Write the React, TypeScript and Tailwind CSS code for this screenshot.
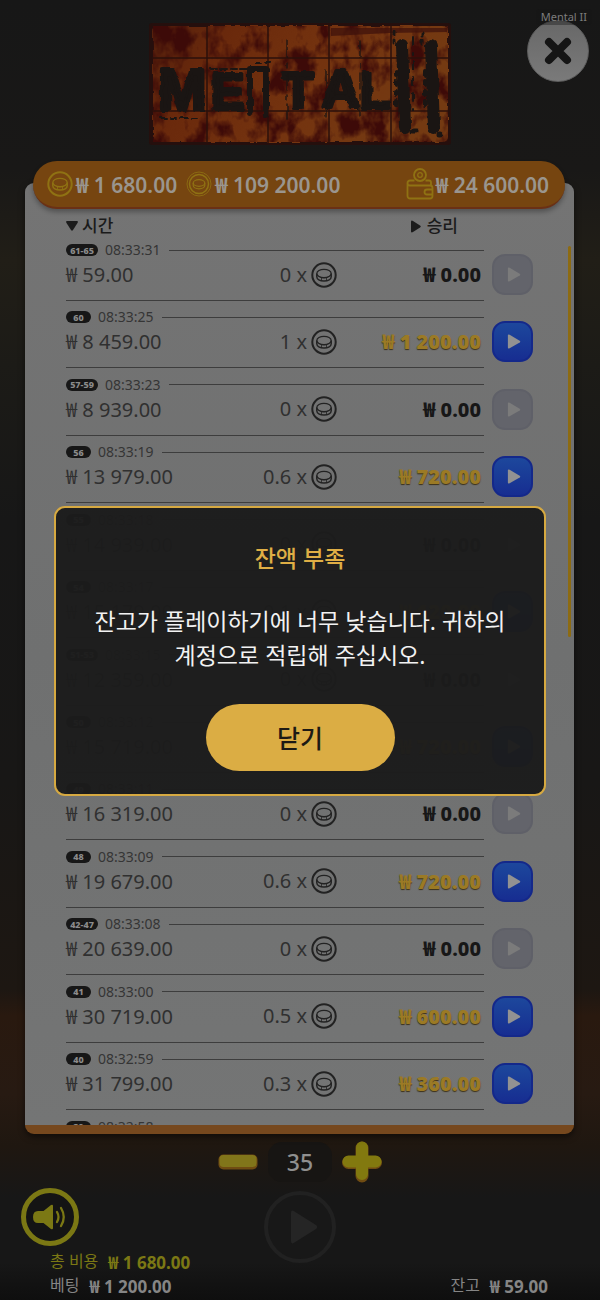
import React, { useState } from "react";

type Entry = {
  rounds: string;
  time: string;
  balance: string;
  multiplier: string;
  win: string;
};

const ENTRIES: Entry[] = [
  { rounds: "61-65", time: "08:33:31", balance: "59.00", multiplier: "0", win: "0.00" },
  { rounds: "60", time: "08:33:25", balance: "8 459.00", multiplier: "1", win: "1 200.00" },
  { rounds: "57-59", time: "08:33:23", balance: "8 939.00", multiplier: "0", win: "0.00" },
  { rounds: "56", time: "08:33:19", balance: "13 979.00", multiplier: "0.6", win: "720.00" },
  { rounds: "55", time: "08:33:18", balance: "14 939.00", multiplier: "0", win: "0.00" },
  { rounds: "54", time: "08:33:17", balance: "15 179.00", multiplier: "0.1", win: "120.00" },
  { rounds: "51-53", time: "08:33:15", balance: "12 359.00", multiplier: "0", win: "0.00" },
  { rounds: "50", time: "08:33:12", balance: "15 719.00", multiplier: "0.6", win: "720.00" },
  { rounds: "49", time: "08:33:11", balance: "16 319.00", multiplier: "0", win: "0.00" },
  { rounds: "48", time: "08:33:09", balance: "19 679.00", multiplier: "0.6", win: "720.00" },
  { rounds: "42-47", time: "08:33:08", balance: "20 639.00", multiplier: "0", win: "0.00" },
  { rounds: "41", time: "08:33:00", balance: "30 719.00", multiplier: "0.5", win: "600.00" },
  { rounds: "40", time: "08:32:59", balance: "31 799.00", multiplier: "0.3", win: "360.00" },
  { rounds: "39", time: "08:32:58", balance: "32 999.00", multiplier: "0", win: "0.00" },
];

function Money({ value }: { value: string }) {
  return (
    <span className="whitespace-nowrap">
      <span className="font-['Noto_Sans_CJK_KR',sans-serif]">₩</span> {value}
    </span>
  );
}

function CoinIcon({ className }: { className: string }) {
  return (
    <svg viewBox="0 0 26 26" className={className} fill="none" stroke="currentColor" aria-hidden="true">
      <circle cx="13" cy="13" r="11.7" strokeWidth="2" />
      <ellipse cx="13" cy="11.5" rx="7.2" ry="4.2" strokeWidth="1.2" />
      <path d="M5.8 11.5v3.3c0 2.4 3.1 4.2 7.2 4.2s7.2-1.8 7.2-4.2v-3.3" strokeWidth="1.5" />
      <path d="M7.5 13.8c1 1.4 3 2.2 5.5 2.2s4.500-.8 5.500-2.200M10.500 16v2.500M15.500 16v2.500" strokeWidth="0.8" />
    </svg>
  );
}

function CoinStackIcon({ className }: { className: string }) {
  return (
    <svg viewBox="0 0 26 26" className={className} fill="none" stroke="currentColor" aria-hidden="true">
      <circle cx="13" cy="13" r="12" strokeWidth="0.8" />
      <circle cx="13" cy="13" r="9.5" strokeWidth="1.5" />
      <ellipse cx="13" cy="12" rx="5.8" ry="3.3" strokeWidth="1.2" />
      <path d="M7.2 12v2.300c0 2 2.500 3.500 5.800 3.500s5.800-1.500 5.800-3.500V12" strokeWidth="1.2" />
    </svg>
  );
}

function WalletIcon({ className }: { className: string }) {
  return (
    <svg viewBox="0 0 28 32" className={className} fill="none" stroke="currentColor" strokeWidth="1.8" aria-hidden="true">
      <circle cx="14" cy="7" r="6" />
      <circle cx="14" cy="7" r="2.3" strokeWidth="1.3" />
      <path d="M8.500 12.500H4a2.500 2.500 0 0 0 0 5h20a2.500 2.500 0 0 1 2.500 2.500v8a2.500 2.500 0 0 1-2.500 2.500H4A2.500 2.500 0 0 1 1.500 28V15M19.500 12.500H23a2 2 0 0 1 2 2v3" />
      <path d="M26.500 21.500H21a2.500 2.500 0 0 0 0 5h5.500" />
    </svg>
  );
}

function Logo() {
  const seams = [58, 119, 180, 242];
  return (
    <svg viewBox="0 0 302 122" className="h-[122px] w-[302px]" role="img" aria-label="Mental II">
      <defs>
        <linearGradient id="rust" x1="0" x2="1" y1="0" y2="0.25">
          <stop offset="0" stopColor="#54200c" />
          <stop offset="0.25" stopColor="#6a290c" />
          <stop offset="0.6" stopColor="#74330f" />
          <stop offset="1" stopColor="#743a12" />
        </linearGradient>
        <filter id="stain" x="0" y="0" width="100%" height="100%" colorInterpolationFilters="sRGB">
          <feTurbulence type="fractalNoise" baseFrequency="0.05 0.035" numOctaves="4" seed="8" />
          <feColorMatrix values="0 0 0 0 0.24  0 0 0 0 0.04  0 0 0 0 0.03  4 0 0 0 -1.7" />
        </filter>
        <filter id="rough" x="-5%" y="-5%" width="110%" height="110%" colorInterpolationFilters="sRGB">
          <feTurbulence type="fractalNoise" baseFrequency="0.14" numOctaves="2" seed="3" />
          <feDisplacementMap in="SourceGraphic" scale="4" xChannelSelector="R" yChannelSelector="G" />
        </filter>
      </defs>
      <rect width="302" height="122" rx="3" fill="#250f0d" />
      <g filter="url(#rough)">
        <rect x="4" y="3" width="295" height="116" rx="5" fill="url(#rust)" />
      </g>
      <rect x="4" y="3" width="295" height="116" rx="5" filter="url(#stain)" />
      <path d="M182 5H298V9L240 10L182 13Z" fill="#3c100b" opacity="0.7" />
      <g stroke="#2b100b" strokeWidth="1.5">
        {seams.map((x) => (
          <path key={x} d={`M${x} 2V120`} />
        ))}
        <path d="M3 35H299M3 88H299" />
      </g>
      <g
        filter="url(#rough)"
        fill="#1a1513"
        stroke="#1a1513"
        strokeWidth="4"
        strokeLinejoin="round"
        className="font-['Liberation_Sans',sans-serif] font-bold"
      >
        <text x="9" y="87" fontSize="58">M</text>
        <text x="62" y="86" fontSize="50">E</text>
        <text x="134" y="85" fontSize="50">T</text>
        <text x="173" y="84" fontSize="52">A</text>
        <text x="211" y="85" fontSize="50">L</text>
      </g>
      <g stroke="#1a1513" fill="none" strokeLinecap="round" filter="url(#rough)">
        <path d="M101 90V46H117V92" strokeWidth="6" strokeLinejoin="round" />
        <path d="M253 22L256 104M282 23L285 105" strokeWidth="12" />
        <path d="M138 18V96M177 47V93M211 18V92" strokeWidth="1.3" strokeDasharray="16 6 5 5" />
        <path d="M245 9v16M273 10v16" strokeWidth="3" strokeDasharray="3 5" />
        <path d="M264 14v18M264 38v50" strokeWidth="2" strokeDasharray="8 8" />
        <path d="M247 48v36M276 48v36" strokeWidth="4" strokeDasharray="4 6" />
        <path d="M12 95h38M62 46h36M106 40h18" strokeWidth="2" strokeDasharray="6 4" />
        <path d="M264 108h3M290 112h1" strokeWidth="5" />
      </g>
    </svg>
  );
}

function HistoryRow({ entry }: { entry: Entry }) {
  const won = entry.win !== "0.00";
  return (
    <li className="flex gap-2">
      <div className="min-w-0 flex-1">
        <div className="flex h-[18px] items-center">
          <span
            className={`flex h-3 items-center justify-center rounded-full bg-[#171717] text-[9px] leading-none font-extrabold text-[#8b8b8b] ${
              entry.rounds.length > 2 ? "w-8" : "w-[25px]"
            }`}
          >
            {entry.rounds}
          </span>
          <time className="ml-[7px] text-[14px] leading-[18px] text-[#353535]">{entry.time}</time>
          <span className="ml-2 h-px flex-1 bg-[#3d3d3d]" />
        </div>
        <div className="grid h-[42px] grid-cols-[168px_103px_1fr] items-center border-b border-[#3d3d3d] pr-[3px] pb-[10px] text-[20px] leading-6 text-[#303030]">
          <Money value={entry.balance} />
          <span className="flex items-center justify-end gap-1 whitespace-nowrap">
            {entry.multiplier} x
            <CoinIcon className="size-[26px] text-[#222222]" />
          </span>
          <span
            className={
              won
                ? "text-right font-black text-[#9b7a25] [text-shadow:0_1px_1px_#3c3018]"
                : "text-right font-extrabold text-[#171717]"
            }
          >
            <Money value={entry.win} />
          </span>
        </div>
      </div>
      <button
        type="button"
        aria-label={`${entry.rounds} 재생`}
        disabled={!won}
        className={`mt-[13px] flex size-[41px] items-center justify-center rounded-[13px] border-2 ${
          won
            ? "border-[#14288a] bg-linear-to-b from-[#1d479c] to-[#172d91] text-[#929292]"
            : "border-[#5f6068] bg-[#63646b] text-[#7b7b7b]"
        }`}
      >
        <svg viewBox="0 0 16 18" className="ml-[2px] h-[17px] w-[14px]" fill="currentColor" aria-hidden="true">
          <path d="M1 2.200Q1 .2 3 1.300L14.500 8Q15.800 9 14.500 10L3 16.700Q1 17.800 1 15.800Z" />
        </svg>
      </button>
    </li>
  );
}

export default function App() {
  const [open, setOpen] = useState(true);
  const [count, setCount] = useState(35);

  return (
    <main className="relative min-h-screen overflow-hidden bg-[#171717] bg-[linear-gradient(to_bottom,#171717_0,#191817_13%,#211e17_20%,#1c1b17_28%,#171717_40%,#181716_60%,#1d1712_76%,#29190f_78%,#271a12_84%,#1f1710_88%,#171717_92%,#171717_97%,#0e0e0e_100%)] font-['Noto_Sans','Noto_Sans_CJK_KR',sans-serif]">
      <header className="relative flex justify-center pt-[23px]">
        <h1>
          <Logo />
        </h1>
        <button
          type="button"
          aria-label="나가기"
          className="absolute top-5 right-[11px] flex size-[62px] items-center justify-center rounded-full border border-[#5d5d5d] bg-linear-to-b from-[#686868] to-[#7a7a7a]"
        >
          <svg viewBox="0 0 28 28" className="size-7" stroke="#151515" strokeWidth="8" strokeLinecap="round" aria-hidden="true">
            <path d="M5 5L23 23M23 5L5 23" />
          </svg>
        </button>
        <span className="absolute top-[9px] right-2 rounded bg-[#171717]/40 px-[5px] text-[11px] leading-4 text-[#7c7c7c]">
          Mental II
        </span>
      </header>

      <div className="relative z-10 mr-[35px] ml-[33px] mt-4 flex h-12 items-center rounded-full border-b-2 border-[#6a3015] bg-[#764510] pr-4 pl-[14px] text-[21px] leading-7 font-semibold text-[#9a958e] shadow-[0_3px_5px_rgba(0,0,0,0.3)]">
        <CoinIcon className="mr-[3px] size-[26px] text-[#8f7213]" />
        <Money value="1 680.00" />
        <CoinStackIcon className="mr-[3px] ml-[9px] size-[26px] text-[#8f7213]" />
        <Money value="109 200.00" />
        <WalletIcon className="mr-[2px] ml-auto h-8 w-7 text-[#8f7213]" />
        <Money value="24 600.00" />
      </div>

      <section className="relative mr-[26px] ml-[25px] -mt-[26px] rounded-[9px] border-b-[9px] border-[#76481e] bg-linear-to-b from-[#747474] via-[#6f7070] to-[#747575] pt-7 shadow-[0_3px_6px_rgba(0,0,0,0.5)]">
        <div className="flex h-[30px] items-center justify-between pr-[116px] pl-[41px] text-[17px] leading-6 font-medium text-[#1b1b1b]">
          <button type="button" className="flex items-center gap-1">
            <svg viewBox="0 0 12 10" className="h-[10px] w-3" fill="currentColor" aria-hidden="true">
              <path d="M1 0H11Q12.500 .3 11.500 2L7 9Q6 10.500 5 9L.5 2Q-.5 .3 1 0Z" />
            </svg>
            시간
          </button>
          <button type="button" className="flex items-center gap-[6px]">
            <svg viewBox="0 0 10 12" className="h-[13px] w-[10px]" fill="currentColor" aria-hidden="true">
              <path d="M0 1Q.3-.5 2 .5L9 5Q10.500 6 9 7L2 11.500Q.3 12.500 0 11Z" />
            </svg>
            승리
          </button>
        </div>
        <div className="h-[884px] overflow-hidden">
          <ul className="grid h-[944px] auto-rows-fr pr-[41px] pl-[41px]">
            {ENTRIES.map((entry) => (
              <HistoryRow key={entry.rounds} entry={entry} />
            ))}
          </ul>
        </div>
        <span className="absolute top-[63px] right-[3px] h-[391px] w-[3px] rounded-full bg-[#8d6b12]" />
      </section>

      <div className="mt-2 flex h-10 items-center justify-center gap-[10px]">
        <button
          type="button"
          aria-label="줄이기"
          onClick={() => setCount(count - 1)}
          className="flex h-10 w-10 items-center justify-center"
        >
          <svg viewBox="0 0 40 16" className="h-4 w-10" aria-hidden="true">
            <rect x="0.500" y="0.500" width="39" height="15" rx="5" fill="#704c12" />
            <rect x="1.500" y="1" width="37" height="12" rx="4" fill="#81751a" />
          </svg>
        </button>
        <output className="flex h-10 w-16 items-center justify-center rounded-[14px] bg-[#171513] text-[23px] leading-8 font-medium text-[#8f8f8f]">
          {count}
        </output>
        <button
          type="button"
          aria-label="늘리기"
          onClick={() => setCount(count + 1)}
          className="flex h-10 w-10 items-center justify-center"
        >
          <svg viewBox="0 0 40 42" className="h-[42px] w-10" aria-hidden="true">
            <path d="M20 7V35M6.500 21.500H33.500" stroke="#704c12" strokeWidth="13" strokeLinecap="round" />
            <path d="M20 6.500V33M6.500 20.500H33.500" stroke="#82790f" strokeWidth="12" strokeLinecap="round" />
          </svg>
        </button>
      </div>

      <footer className="grid grid-cols-3 pt-[6px] pb-1 text-[16px] leading-[23px]">
        <div className="pl-[21px]">
          <button
            type="button"
            aria-label="소리"
            className="flex size-[58px] items-center justify-center rounded-full border-[5px] border-[#7b7814] bg-[#141414] text-[#7b7814]"
          >
            <svg viewBox="0 0 36 28" className="h-7 w-9 shrink-0" fill="currentColor" aria-hidden="true">
              <path d="M6 8h5.500l7.500-6Q21 1 21 3V25Q21 27 19 26L11.500 20H6Q1 20 1 14T6 8Z" />
              <path d="M25 9Q28 14 25 19M29 5Q34.500 14 29 23" fill="none" stroke="currentColor" strokeWidth="2.3" strokeLinecap="round" />
            </svg>
          </button>
          <dl className="pt-1 pl-[29px] whitespace-nowrap">
            <div className="flex gap-[10px] text-[#7b7814]">
              <dt>총 비용</dt>
              <dd className="text-[17px] font-bold">
                <Money value="1 680.00" />
              </dd>
            </div>
            <div className="flex gap-[10px] text-[#858585]">
              <dt>베팅</dt>
              <dd className="text-[17px] font-bold">
                <Money value="1 200.00" />
              </dd>
            </div>
          </dl>
        </div>
        <button
          type="button"
          aria-label="시작"
          className="mt-[3px] flex size-[72px] items-center justify-center justify-self-center rounded-full border-4 border-[#212121] bg-[#181818] text-[#252525]"
        >
          <svg viewBox="0 0 30 38" className="ml-2 h-[38px] w-[30px]" fill="currentColor" aria-hidden="true">
            <path d="M2 5Q2 1 5.500 3.500L27 17Q29.500 19 27 21L5.500 34.500Q2 37 2 33Z" />
          </svg>
        </button>
        <dl className="flex justify-end gap-[10px] self-end pr-[52px] whitespace-nowrap text-[#858585]">
          <dt>잔고</dt>
          <dd className="text-[17px] font-bold">
            <Money value="59.00" />
          </dd>
        </dl>
      </footer>

      {open && (
        <div className="absolute inset-0 z-20 flex items-center justify-center px-[54px]">
          <div
            role="dialog"
            aria-modal="true"
            aria-labelledby="dialog-title"
            className="flex w-full flex-col items-center rounded-[11px] border-2 border-[#d6a941] bg-[#1c1c1c]/97 px-6 pt-[33px] pb-[23px] text-center"
          >
            <h2 id="dialog-title" className="text-[23px] leading-[34px] font-medium text-[#dfae45]">
              잔액 부족
            </h2>
            <p className="mt-[29px] text-[23px] leading-[34px] break-keep text-[#f2f2f2]">
              잔고가 플레이하기에 너무 낮습니다. 귀하의 계정으로 적립해 주십시오.
            </p>
            <button
              type="button"
              onClick={() => setOpen(false)}
              className="mt-8 h-[67px] w-[189px] rounded-full bg-[#dbad44] text-[25px] leading-8 font-medium text-[#1d1a14]"
            >
              닫기
            </button>
          </div>
        </div>
      )}
    </main>
  );
}
